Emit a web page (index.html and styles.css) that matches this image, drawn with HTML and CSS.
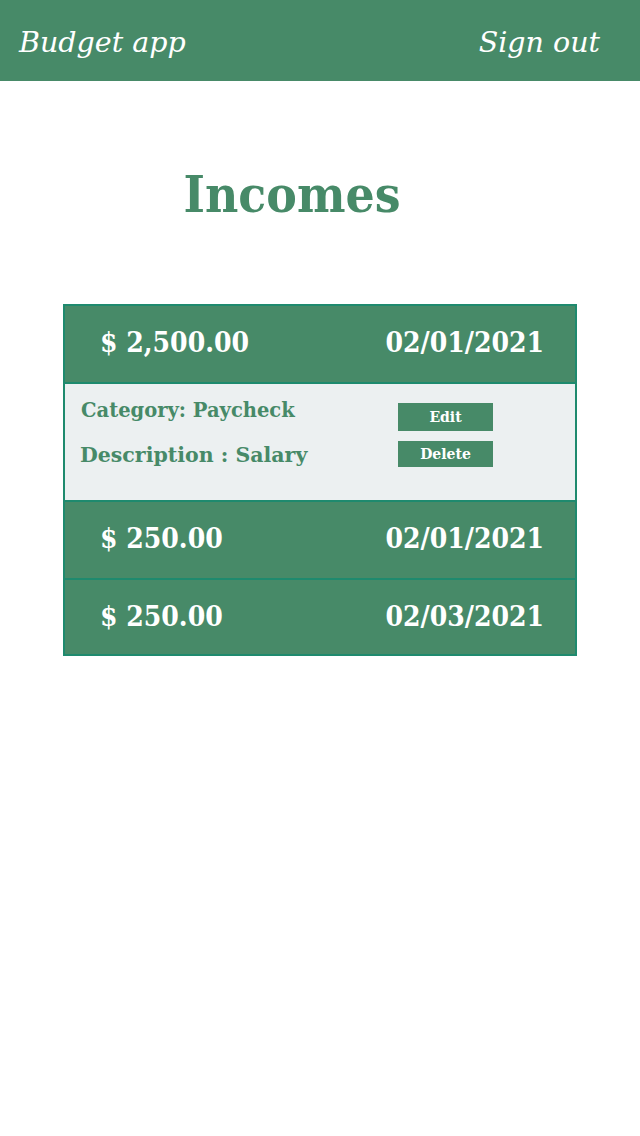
FILE: index.html
```html
<!DOCTYPE html>
<html lang="en">
<head>
<meta charset="utf-8">
<title>Budget app</title>
<link rel="stylesheet" href="styles.css">
</head>
<body>
<header class="topbar">
  <span class="brand">Budget app</span>
  <span class="signout">Sign out</span>
</header>
<main class="content">
  <h1 class="title">Incomes</h1>
  <section class="card">
    <div class="row">
      <span class="amount">$ 2,500.00</span>
      <span class="date">02/01/2021</span>
    </div>
    <div class="detail">
      <div class="info">
        <p class="category">Category: Paycheck</p>
        <p class="description">Description : Salary</p>
      </div>
      <div class="actions">
        <button class="btn btn-edit">Edit</button>
        <button class="btn btn-delete">Delete</button>
      </div>
    </div>
    <div class="row">
      <span class="amount">$ 250.00</span>
      <span class="date">02/01/2021</span>
    </div>
    <div class="row">
      <span class="amount">$ 250.00</span>
      <span class="date">02/03/2021</span>
    </div>
  </section>
</main>
</body>
</html>
```
FILE: styles.css
```css
* { box-sizing: border-box; }
html, body { margin: 0; padding: 0; background: #fff; }
body { font-family: "DejaVu Serif", serif; }

.topbar {
  height: 81px;
  background: #478a68;
  display: flex;
  align-items: center;
  justify-content: space-between;
  padding: 0 40px 0 19px;
  color: #fff;
  font-style: italic;
  font-size: 28.5px;
}
.brand, .signout { line-height: 1; padding-top: 6px; }

.content { padding-top: 85px; }

.title {
  margin: 0 0 82px;
  padding-right: 56px;
  text-align: center;
  color: #478a68;
  font-size: 51px;
  font-weight: bold;
  font-stretch: condensed;
  line-height: 56px;
}

.card {
  width: 514px;
  margin-left: 63px;
  border: 2px solid #1e8a6e;
}

.row {
  height: 76px;
  background: #478a68;
  display: flex;
  align-items: center;
  justify-content: space-between;
  padding: 0 31px 4px 35px;
  color: #fff;
  font-weight: bold;
  font-size: 28px;
  font-stretch: condensed;
}
.row + .row, .detail + .row { border-top: 2px solid #1e8a6e; height: 78px; }
.row:last-child { height: 76px; padding-bottom: 2px; }

.detail {
  border-top: 2px solid #1e8a6e;
  height: 118px;
  background: #ecf0f1;
  display: flex;
  padding: 19px 0 0 15px;
}
.info { width: 318px; }
.category, .description {
  margin: 0;
  color: #478a68;
  font-weight: bold;
}
.category { font-size: 19.5px; line-height: 24px; margin-left: 1px; margin-top: -4px; }
.description { font-size: 20.5px; line-height: 26px; margin-top: 19px; }

.actions { display: flex; flex-direction: column; gap: 10px; }
.btn {
  width: 95px;
  border: 0;
  padding: 0;
  background: #478a68;
  color: #fff;
  font-family: "DejaVu Serif", serif;
  font-weight: bold;
  font-size: 14px;
}
.btn-edit { height: 28px; }
.btn-delete { height: 26px; }
```
